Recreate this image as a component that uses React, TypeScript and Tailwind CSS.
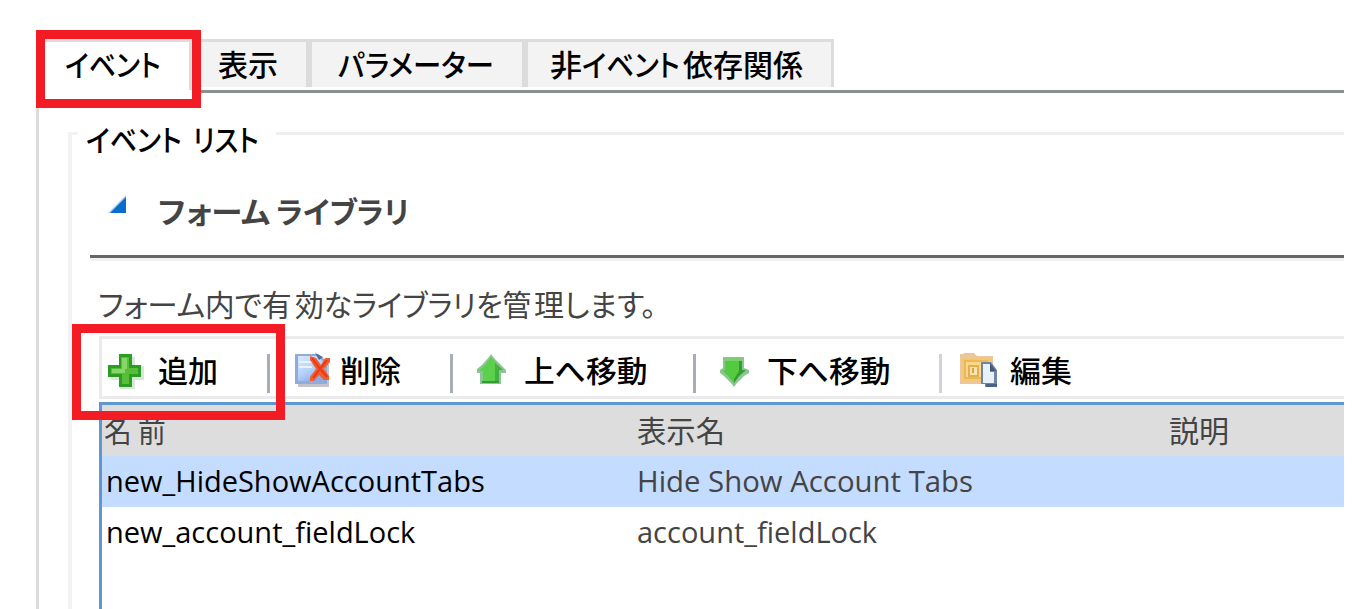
import { useLayoutEffect, useRef, useState, type ReactNode } from "react";

/** A run of text squeezed or stretched to an exact advance width. */
function Fit({ w, children }: { w: number; children: ReactNode }) {
  const ref = useRef<HTMLSpanElement>(null);
  const [scale, setScale] = useState(1);
  useLayoutEffect(() => {
    if (ref.current) setScale(w / ref.current.offsetWidth);
  }, [w, children]);
  return (
    <span className="block shrink-0" style={{ width: w }}>
      <span
        ref={ref}
        className="inline-block origin-left whitespace-nowrap"
        style={{ transform: `scaleX(${scale})` }}
      >
        {children}
      </span>
    </span>
  );
}

const PlusIcon = () => (
  <svg className="h-[36px] w-[36px]" viewBox="0 0 36 36">
    <path d="M12 3h15v9h9v14h-9v9H12v-9H3V12h9z" fill="#dbe6db" />
    <path d="M11 0h13v11h9v12h-9v10H11V23H0V11h11z" fill="#2d9c24" />
    <path d="M13 3h8v11h9v6h-9v10h-7V20H3v-6h10z" fill="#55bf3a" />
    <path d="M14 4h5v11h-2v4H4v-4h10z" fill="#86d766" />
  </svg>
);

const DeleteIcon = () => (
  <svg className="h-[36px] w-[39px]" viewBox="0 0 39 36">
    <defs>
      <linearGradient id="sheet" x1="0" y1="0" x2="0.6" y2="1">
        <stop offset="0" stopColor="#d8e9ff" />
        <stop offset="0.6" stopColor="#b4d1fa" />
        <stop offset="1" stopColor="#86ade8" />
      </linearGradient>
    </defs>
    <path d="M4 4h24l7 7v23H4z" fill="#c3c4cb" />
    <path d="M1 1h23l9 8v22H1z" fill="#93abd8" />
    <path d="M4 3h19l8 7v18H4z" fill="url(#sheet)" />
    <path d="M5 9h13M5 14h13" stroke="#eaf4ff" strokeWidth="2" />
    <path d="M21 0l4 7 4-3z" fill="#566b9c" />
    <path d="M16 3l6 2 5 7 4-7h5v4l-6 7 5 7v4h-5l-5-5-5 6h-4v-4l6-8-6-9z" fill="#f55b2d" />
    <path d="M18 5l8 11 7-9M25 17l-6 8M27 17l6 7" stroke="#e23b1b" strokeWidth="2" fill="none" />
  </svg>
);

const UpIcon = () => (
  <svg className="h-[33px] w-[30px]" viewBox="0 0 30 33">
    <path d="M14 0l3 4 7 7 5 5v3h-5v11H3V19H0v-4l5-4 7-8z" fill="#8ec394" />
    <path d="M14 3l6 7 6 6h-4v12H6V17H2l7-7z" fill="#5bd04a" />
    <path d="M18 9l8 7h-4v12h-4z" fill="#43b13d" />
    <path d="M5 27h17v2H5z" fill="#37983a" />
  </svg>
);

const DownIcon = () => (
  <svg className="h-[33px] w-[30px]" viewBox="0 0 30 33">
    <path d="M3 3h21v11l5 2v3l-5 3-7 7-3 4-3-4-7-7-4-3v-3l3-2z" fill="#8ec394" />
    <path d="M5 5h17v11h4l-7 6-5 7-6-7-6-6h3z" fill="#54ca41" />
    <path d="M19 5h3v11h4l-7 6-5 7v-4l5-8z" fill="#359b34" />
    <path d="M5 4h17v3H5z" fill="#78cf6b" />
  </svg>
);

const EditIcon = () => (
  <svg className="h-[36px] w-[39px]" viewBox="0 0 39 36">
    <path d="M0 1h3l1-1h10l3 3h16v28H0z" fill="#e9c8a0" />
    <path d="M2 5h29v23H2z" fill="#f3c774" />
    <path d="M5 8h22v17H5z" fill="#f8d78b" stroke="#ebb75d" strokeWidth="2" />
    <path d="M9 13h9v10H9z" fill="#fbe3ad" stroke="#e3ae50" strokeWidth="2" />
    <path d="M12 15h2v5h-2z" fill="#d9a348" />
    <path d="M21 9h10l6 8v17H25v-3h-4z" fill="#7185a3" />
    <path d="M23 11h7v8h4v11H23z" fill="#e8f0fa" />
    <path d="M30 10v8h6z" fill="#435a80" />
    <path d="M26 31h11v3H26z" fill="#4c6186" />
  </svg>
);

function Tab({ className, children }: { className: string; children: ReactNode }) {
  return (
    <div className={`flex h-[48px] shrink-0 border-t-3 border-[#dcdcdc] bg-[#f3f3f3] ${className}`}>
      <div className="-mt-px flex">{children}</div>
    </div>
  );
}

const Sep = ({ className = "bg-[#a9adb5]" }: { className?: string }) => (
  <div className={`mt-[15px] h-[39px] w-[3px] shrink-0 ${className}`} />
);

export default function App() {
  return (
    <div className="relative h-[609px] w-[1353px] overflow-hidden bg-white pt-[39px] pl-[36px] text-[30px] leading-[44px] font-medium text-black">
      <div className="w-[1308px] font-['Noto_Sans_CJK_JP',sans-serif] [font-feature-settings:'palt']">
        <div className="flex h-[51px]">
          <div className="flex h-[51px] w-[156px] shrink-0 border-t-3 border-r-3 border-[#dcdcdc] pl-[29px]">
            <div className="-mt-px flex">
              <Fit w={96}>イベント</Fit>
            </div>
          </div>
          <Tab className="w-[120px] border-r-6 pl-[26px]">
            <Fit w={60}>表示</Fit>
          </Tab>
          <Tab className="w-[216px] border-r-6 pl-[26px]">
            <Fit w={156}>パラメーター</Fit>
          </Tab>
          <Tab className="w-[306px] border-r-3 pl-[22px]">
            <Fit w={32}>非</Fit>
            <Fit w={98}>イベント</Fit>
            <span className="w-[3px]" />
            <Fit w={120}>依存関係</Fit>
          </Tab>
        </div>
        <div className="ml-[156px] h-[3px] bg-[#8c8f90]" />

        <div className="-mt-[3px] h-[519px] border-l-3 border-[#dcdcdc] pt-[24px] pl-[29px]">
          <div className="flex h-[44px]">
            <div className="mt-[18px] h-[26px] w-[10px] shrink-0 border-t-3 border-l-4 border-[#f2f2f2]" />
            <div className="flex w-[198px] shrink-0 gap-[11px] pt-[2px] pl-[8px]">
              <Fit w={96}>イベント</Fit>
              <Fit w={66}>リスト</Fit>
            </div>
            <div className="mt-[18px] h-[3px] grow bg-[#eeeeee]" />
          </div>

          <div className="h-[451px] border-l-4 border-[#f3f3f3] pl-[18px] text-[#444444]">
            <div className="flex h-[97px] pt-[30px] pl-[18px] font-bold">
              <svg className="mt-[7px] h-[18px] w-[18px] shrink-0" viewBox="0 0 18 18">
                <path d="M0 18L18 0v18z" fill="#a9cff0" />
                <path d="M2 18L18 2v16z" fill="#0a6ccc" />
              </svg>
              <div className="ml-[32px] flex gap-[6px]">
                <Fit w={112}>フォーム</Fit>
                <Fit w={133}>ライブラリ</Fit>
              </div>
            </div>
            <div className="h-[6px] border-t-3 border-[#666666] bg-[#f2f2f2]" />

            <div className="flex h-[75px] pt-[20px] pl-[8px] font-normal">
              <Fit w={107}>フォーム</Fit>
              <Fit w={87}>内で有</Fit>
              <span className="w-[3px]" />
              <Fit w={236}>効なライブラリを管</Fit>
              <span className="w-[3px]" />
              <Fit w={122}>理します。</Fit>
            </div>

            <div className="ml-[9px] flex h-[63px] border-t-3 border-b-3 border-l-3 border-[#ebebeb] text-black">
              <div className="flex w-[165px] shrink-0 pt-[8px] pl-[6px]">
                <div className="mt-[7px] w-[50px]"><PlusIcon /></div>
                <Fit w={60}>追加</Fit>
              </div>
              <Sep />
              <div className="flex w-[180px] shrink-0 pt-[8px] pl-[24px]">
                <div className="mt-[6px] w-[46px]"><DeleteIcon /></div>
                <Fit w={61}>削除</Fit>
              </div>
              <Sep />
              <div className="flex w-[240px] shrink-0 pt-[8px] pl-[24px]">
                <div className="mt-[7px] w-[47px]"><UpIcon /></div>
                <Fit w={123}>上へ移動</Fit>
              </div>
              <Sep />
              <div className="flex w-[243px] shrink-0 pt-[8px] pl-[24px]">
                <div className="mt-[7px] w-[47px]"><DownIcon /></div>
                <Fit w={123}>下へ移動</Fit>
              </div>
              <Sep className="bg-[#d0d4d8]" />
              <div className="flex pt-[8px] pl-[18px]">
                <div className="mt-[6px] w-[50px]"><EditIcon /></div>
                <Fit w={62}>編集</Fit>
              </div>
            </div>

            <div className="mt-[3px] ml-[9px] h-[207px] border-t-3 border-l-3 border-[#6096d2] font-normal">
              <div className="flex h-[51px] bg-[#dddddd] pt-[2px] pl-[2px]">
                <div className="w-[533px] shrink-0"><Fit w={62}>名 前</Fit></div>
                <div className="w-[532px] shrink-0"><Fit w={88}>表示名</Fit></div>
                <Fit w={60}>説明</Fit>
              </div>
              <div className="flex h-[51px] bg-[#c4dcff] pt-[3px] pl-[4px] font-['Open_Sans','Noto_Sans',sans-serif] text-[29px]">
                <div className="w-[531px] shrink-0 text-black"><Fit w={379}>new_HideShowAccountTabs</Fit></div>
                <Fit w={336}>Hide Show Account Tabs</Fit>
              </div>
              <div className="flex h-[51px] pt-[3px] pl-[4px] font-['Open_Sans','Noto_Sans',sans-serif] text-[29px]">
                <div className="w-[531px] shrink-0 text-black"><Fit w={309}>new_account_fieldLock</Fit></div>
                <Fit w={240}>account_fieldLock</Fit>
              </div>
            </div>
          </div>
        </div>
      </div>

      <div className="absolute top-[30px] left-[36px] h-[78px] w-[165px] border-9 border-[#f31b24]" />
      <div className="absolute top-[324px] left-[72px] h-[96px] w-[213px] border-9 border-[#f31b24]" />
    </div>
  );
}
